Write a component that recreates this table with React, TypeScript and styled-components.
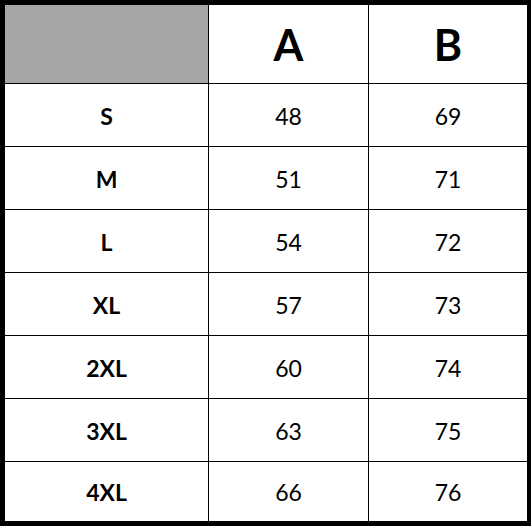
import styled, { createGlobalStyle } from 'styled-components';

const GlobalStyle = createGlobalStyle`
    html, body {
        margin: 0;
        padding: 0;
        background: #ffffff;
    }
`;

const Frame = styled.div`
    width: 531px;
    height: 527px;
    box-sizing: border-box;
    padding-bottom: 1px;
    background: #ffffff;
`;

const Table = styled.div`
    display: grid;
    grid-template-columns: 203px 159px 158px;
    grid-template-rows: 78px repeat(6, 62px) 59px;
    gap: 1px;
    background: #000000;
    border-style: solid;
    border-color: #000000;
    border-width: 5px 4px 5px 5px;
    font-family: Lato, "Liberation Sans", sans-serif;
    color: #000000;
`;

const Cell = styled.div<{ $head?: boolean; $bold?: boolean; $blank?: boolean }>`
    display: flex;
    align-items: center;
    justify-content: center;
    background: ${props => (props.$blank ? '#a6a6a6' : '#ffffff')};
    font-size: ${props => (props.$head ? '43px' : '23px')};
    font-weight: ${props => (props.$head || props.$bold ? 700 : 400)};
    padding-top: 1px;
    box-sizing: border-box;
`;

const rows = [
    ['S', 48, 69],
    ['M', 51, 71],
    ['L', 54, 72],
    ['XL', 57, 73],
    ['2XL', 60, 74],
    ['3XL', 63, 75],
    ['4XL', 66, 76],
];

const App = () => (
    <>
        <GlobalStyle />
        <Frame>
            <Table>
                <Cell $blank />
                <Cell $head>A</Cell>
                <Cell $head>B</Cell>
                {rows.map(([size, a, b]) => [
                    <Cell key={`${size}-s`} $bold>{size}</Cell>,
                    <Cell key={`${size}-a`}>{a}</Cell>,
                    <Cell key={`${size}-b`}>{b}</Cell>,
                ])}
            </Table>
        </Frame>
    </>
);

export default App;
